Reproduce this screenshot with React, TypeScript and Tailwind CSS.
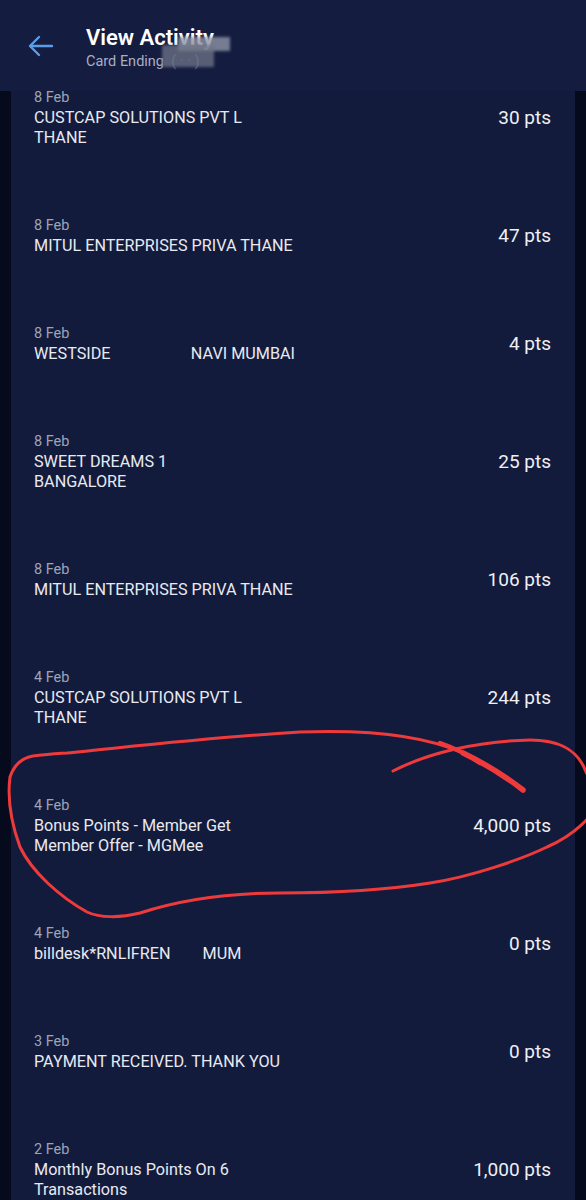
type Txn = { date: string; lines: string[]; pts: string }

const txns: Txn[] = [
  { date: "8 Feb", lines: ["CUSTCAP SOLUTIONS PVT L", "THANE"], pts: "30 pts" },
  { date: "8 Feb", lines: ["MITUL ENTERPRISES PRIVA THANE"], pts: "47 pts" },
  { date: "8 Feb", lines: ["WESTSIDE                    NAVI MUMBAI"], pts: "4 pts" },
  { date: "8 Feb", lines: ["SWEET DREAMS 1", "BANGALORE"], pts: "25 pts" },
  { date: "8 Feb", lines: ["MITUL ENTERPRISES PRIVA THANE"], pts: "106 pts" },
  { date: "4 Feb", lines: ["CUSTCAP SOLUTIONS PVT L", "THANE"], pts: "244 pts" },
  { date: "4 Feb", lines: ["Bonus Points - Member Get", "Member Offer - MGMee"], pts: "4,000 pts" },
  { date: "4 Feb", lines: ["billdesk*RNLIFREN        MUM"], pts: "0 pts" },
  { date: "3 Feb", lines: ["PAYMENT RECEIVED. THANK YOU"], pts: "0 pts" },
  { date: "2 Feb", lines: ["Monthly Bonus Points On 6", "Transactions"], pts: "1,000 pts" },
]

function BackArrow() {
  return (
    <svg width="26" height="22" viewBox="0 0 26 22" fill="none" stroke="#5c9de8" strokeWidth="2.4" strokeLinecap="round" strokeLinejoin="round">
      <path d="M24 11H2.5" />
      <path d="M11 2L2 11l9 9" />
    </svg>
  )
}

function Row({ t }: { t: Txn }) {
  return (
    <div className="pt-[12px] pb-[56px] pl-[23px] pr-[24px]">
      <div className="flex items-center justify-between">
        <div>
          <div className="text-[14.5px] leading-5 text-[#9ea4b8]">{t.date}</div>
          {t.lines.map((l, i) => (
            <div key={i} className="text-[16.2px] leading-5 text-[#e8eaf0] whitespace-pre">{l}</div>
          ))}
        </div>
        <div className="text-[19px] leading-6 text-[#eef0f5]">{t.pts}</div>
      </div>
    </div>
  )
}

export default function App() {
  return (
    <div className="relative h-[1200px] overflow-hidden bg-[#050a1c]" style={{ fontFamily: "Roboto, 'Noto Sans', sans-serif" }}>
      <div className="relative z-10 h-[91px] bg-[#141c40] flex items-center pl-[28px]">
        <BackArrow />
        <div className="ml-[32px] mt-[5px]">
          <div className="text-[22px] font-semibold leading-7 text-white">View Activity</div>
          <div className="text-[14.5px] leading-5 text-[#a9afc3] whitespace-pre">Card Ending  <span className="text-[#5d6480]">( · · )</span></div>
        </div>
        <div className="absolute left-[178px] top-[37px] h-[14px] w-[52px] bg-[#8f95a6] opacity-80 blur-[1.5px]" />
        <div className="absolute left-[162px] top-[45px] h-[22px] w-[52px] bg-[#6f7587] opacity-75 blur-[1.5px]" />
      </div>

      <div className="-mt-[15px] mx-[11px] bg-[#131b3d]">
        {txns.map((t, i) => (
          <Row key={i} t={t} />
        ))}
      </div>

      <svg className="pointer-events-none absolute left-0 top-0 z-20" width="586" height="1200" viewBox="0 0 586 1200" fill="none" strokeLinecap="round" strokeLinejoin="round">
        <path
          d="M393 771 C430 752 480 741 530 740 C560 740 578 750 586 772 L600 800 C594 815 575 835 547 847 C520 860 470 877 430 883 C380 891 320 893 280 893 C230 893 180 900 140 913 C120 918 100 918 87 912 C60 897 32 872 20 847 C12 825 7 800 10 777 C14 765 22 758 33 756 C50 754 60 753 67 753 C120 748 200 738 300 732 C380 729 430 738 463 753"
          stroke="#ef3a3c"
          strokeWidth="3"
        />
        <path d="M463 753 C490 766 505 776 523 790" stroke="#ef3a3c" strokeWidth="5.5" />
        <path d="M440 743 C460 750 470 756 480 763" stroke="#ef3a3c" strokeWidth="4.5" />
      </svg>
    </div>
  )
}
